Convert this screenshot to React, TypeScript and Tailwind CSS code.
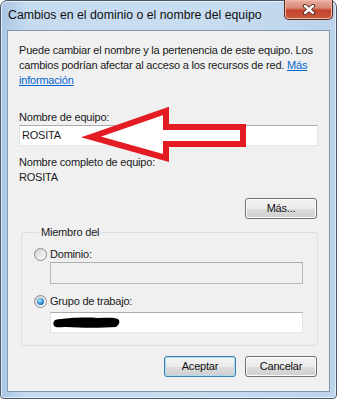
import type { ReactNode } from "react";

const font = "font-['Liberation_Sans',Arial,sans-serif]";

function Radio({ checked }: { checked?: boolean }) {
  return (
    <span className="flex h-[13px] w-[13px] shrink-0 items-center justify-center rounded-full border border-[#8b8c8e] bg-[linear-gradient(135deg,#cfcfcf,#f2f2f2_70%,#ffffff)]">
      {checked && (
        <span className="h-[7px] w-[7px] rounded-full bg-[radial-gradient(circle_at_40%_35%,#b6ecff,#2d8ad8_55%,#0b3f86)]" />
      )}
    </span>
  );
}

function Button({ children, primary }: { children: ReactNode; primary?: boolean }) {
  return (
    <button
      className={`h-[21px] w-[72px] rounded-[3px] border text-[11px] tracking-[-0.2px] text-[#111] bg-[linear-gradient(#f3f3f3,#ebebeb_50%,#dddddd_50%,#cfcfcf)] ${
        primary
          ? "border-[#3c7fb1] shadow-[inset_0_0_0_1px_#a8dcf2]"
          : "border-[#707070] shadow-[inset_0_0_0_1px_#fcfcfc]"
      }`}
    >
      {children}
    </button>
  );
}

function CloseButton() {
  return (
    <div className="-mr-[3px] -mt-[1px] flex h-[20px] w-[49px] items-center justify-center self-start rounded-b-[5px] border border-t-0 border-[#5a2a22] bg-[linear-gradient(#eab0a2,#d98a77_40%,#c2432b_55%,#c95a3e)] shadow-[inset_0_0_0_1px_#f0b9a9]">
      <svg width="14" height="11" viewBox="0 0 14 11">
        <path d="M3 2 L11 9 M11 2 L3 9" stroke="#4a2a24" strokeWidth="4.2" strokeLinecap="round" />
        <path d="M3 2 L11 9 M11 2 L3 9" stroke="#ffffff" strokeWidth="2.4" strokeLinecap="round" />
      </svg>
    </div>
  );
}

export default function App() {
  return (
    <div className={`relative h-[399px] w-[337px] overflow-hidden bg-white ${font}`}>
      <div className="flex h-full flex-col rounded-t-[7px] rounded-b-[4px] border border-[#49596a] bg-[linear-gradient(90deg,#aac6e4,#c6dbf0_8%,#c9ddf1_60%,#bcd3ec)] px-[6px] pb-[6px] shadow-[inset_0_0_0_1px_#e4eef8]">
        <div className="flex h-[29px] items-center justify-between">
          <span className="pl-[1px] text-[12.3px] leading-none text-[#111]">
            Cambios en el dominio o el nombre del equipo
          </span>
          <CloseButton />
        </div>

        <div className="flex flex-1 flex-col border border-[#8497ac] bg-[#f0f0f0] px-[11px] pt-[12px] text-[11px] leading-[15px] tracking-[-0.2px] text-[#1a1a1a]">
          <p className="whitespace-nowrap">
            Puede cambiar el nombre y la pertenencia de este equipo. Los
            <br />
            cambios podrían afectar al acceso a los recursos de red.{" "}
            <a className="text-[#0066cc] underline">Más</a>
            <br />
            <a className="text-[#0066cc] underline">información</a>
          </p>

          <div className="mt-[22px]">Nombre de equipo:</div>
          <div className="flex h-[21px] items-center border border-[#abadb3] border-b-[#e3e9ef] border-x-[#e2e3ea] bg-white pl-[2px]">
            ROSITA
          </div>

          <div className="mt-[9px]">Nombre completo de equipo:</div>
          <div>ROSITA</div>

          <div className="mt-[13px] mr-[1px] flex justify-end">
            <Button>Más...</Button>
          </div>

          <fieldset className="mt-[6px] ml-[2px] rounded-[3px] border border-[#d5dfe5] pb-[12px] pl-[12px] pr-[14px]">
            <legend className="ml-[5px] px-[2px]">Miembro del</legend>
            <label className="mt-[7px] flex h-[15px] items-center gap-[3px]">
              <Radio />
              <span>Dominio:</span>
            </label>
            <div className="ml-[16px] h-[22px] border border-[#b9b9b9] border-t-[#adadad] bg-[#f0f0f0]" />

            <label className="mt-[10px] flex h-[15px] items-center gap-[3px]">
              <Radio checked />
              <span>Grupo de trabajo:</span>
            </label>
            <div className="ml-[16px] mt-[3px] flex h-[21px] items-center border border-[#abadb3] border-b-[#e3e9ef] border-x-[#e2e3ea] bg-white pl-[1px]">
              <svg width="70" height="16" viewBox="0 0 70 16">
                <path
                  d="M3 5 C 14 3, 30 2, 46 3 C 56 3, 64 2, 67 5 C 68 7, 67 10, 64 12 C 50 13, 30 13, 14 12 C 8 12, 4 13, 2 11 C 1 9, 1 7, 3 5 Z"
                  fill="#000"
                />
              </svg>
            </div>
          </fieldset>

          <div className="mt-[10px] mr-[1px] flex justify-end gap-[9px]">
            <Button primary>Aceptar</Button>
            <Button>Cancelar</Button>
          </div>
        </div>
      </div>

      <svg
        className="pointer-events-none absolute left-0 top-0"
        width="337"
        height="399"
        viewBox="0 0 337 399"
      >
        <polygon
          points="91,137 166,111 166,127 243,127 243,144 166,144 166,158"
          fill="#ffffff"
          stroke="#e31b23"
          strokeWidth="6"
          strokeLinejoin="miter"
        />
      </svg>
    </div>
  );
}
